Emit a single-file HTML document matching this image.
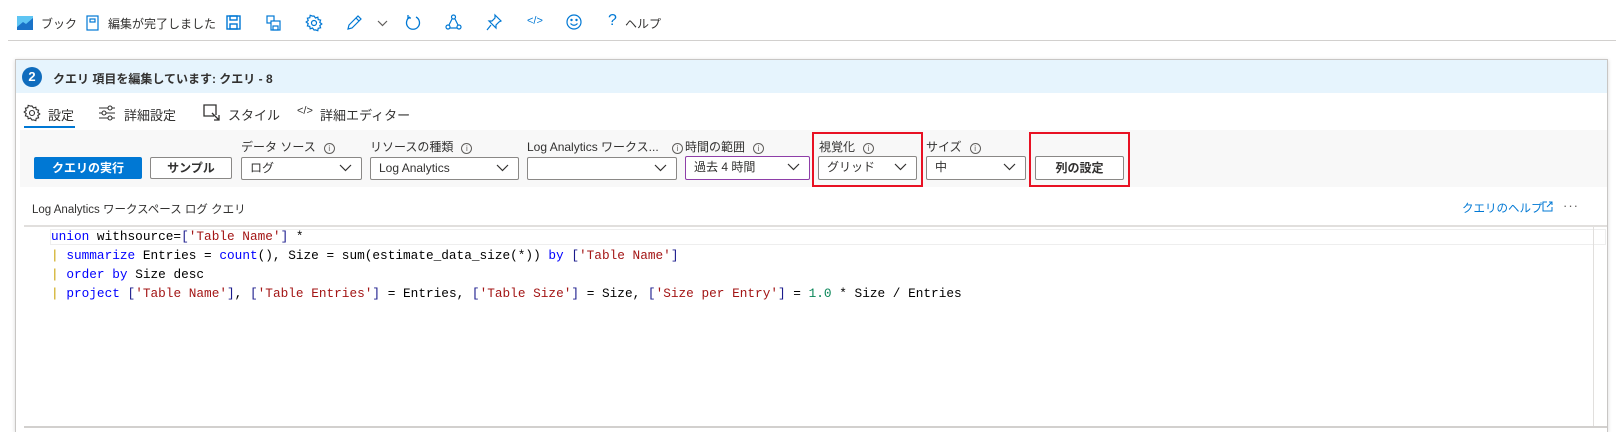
<!DOCTYPE html>
<html><head><meta charset="utf-8"><style>
*{margin:0;padding:0;box-sizing:border-box}
body{width:1624px;height:432px;background:#fff;position:relative;overflow:hidden;font-family:"Liberation Sans","Noto Sans CJK JP",sans-serif;color:#323130;font-size:12px}
.a{position:absolute;white-space:nowrap}
svg.a{overflow:visible}
.dd{position:absolute;height:23px;border:1px solid #8a8886;background:#fff;border-radius:2px;font-size:12px;line-height:21px;padding-left:8px;color:#323130}
.dd svg{position:absolute;right:9px;top:6px}
.lbl{position:absolute;font-size:12px;color:#323130;top:138px}
.info{display:inline-block;width:11px;height:11px;border:1px solid #605e5c;border-radius:50%;font-size:8px;line-height:9px;text-align:center;vertical-align:0px;margin-left:8px;color:#605e5c}
.code{position:absolute;font-family:"Liberation Mono",monospace;font-size:12.75px;left:51px;white-space:pre;color:#000}
.k{color:#0000ff}.s{color:#a31515}.p{color:#c8a000}.n{color:#098658}.b{color:#1a1a8c}
</style></head><body>
<svg class="a" style="left:17px;top:16px" width="16" height="14"><rect width="16" height="14" fill="#5ec5f3"/><path d="M0 14 L0 11 L6 6 L9 8 L16 2 L16 14Z" fill="#1a73c8"/></svg>
<div class="a" style="left:41px;top:15px">ブック</div>
<svg class="a" style="left:86px;top:15px" width="13" height="16" fill="none" stroke="#0078d4" stroke-width="1.2"><rect x="1" y="1" width="11" height="14"/><rect x="4" y="4" width="5" height="3"/></svg>
<div class="a" style="left:108px;top:15px">編集が完了しました</div>
<svg class="a" style="left:226px;top:15px" width="15" height="15" fill="none" stroke="#0078d4" stroke-width="1.4"><rect x="1" y="1" width="13" height="13"/><rect x="4" y="1" width="7" height="4"/><rect x="4" y="9" width="7" height="5"/></svg>
<svg class="a" style="left:266px;top:15px" width="15" height="16" fill="none" stroke="#0078d4" stroke-width="1.2"><rect x="1" y="1" width="7" height="7"/><rect x="5" y="6" width="9" height="9" fill="#fff"/><rect x="7" y="11" width="5" height="4"/></svg>
<svg class="a" style="left:306px;top:15px" width="16" height="16" fill="none" stroke="#0078d4" stroke-width="1.2"><circle cx="8" cy="8" r="2.5"/><path d="M8 1l1.5 2 2.3-.8.4 2.4 2.4.5-.8 2.3 2 1.6-2 1.5.8 2.3-2.4.5-.4 2.4-2.3-.8L8 15l-1.5-2-2.3.8-.4-2.4-2.4-.5.8-2.3-2-1.6 2-1.5-.8-2.3 2.4-.5.4-2.4 2.3.8z"/></svg>
<svg class="a" style="left:346px;top:15px" width="16" height="16" fill="none" stroke="#0078d4" stroke-width="1.2"><path d="M2 14l1-4 9-9 3 3-9 9z M10 3l3 3"/></svg>
<svg class="a" style="left:377px;top:20px" width="11" height="7" fill="none" stroke="#605e5c" stroke-width="1.2"><path d="M1 1l4.5 4.5L10 1"/></svg>
<svg class="a" style="left:405px;top:14px" width="16" height="17" fill="none" stroke="#0078d4" stroke-width="1.3"><path d="M5 3A6.5 6.5 0 1 0 11 3"/><path d="M3 1v3h3"/></svg>
<svg class="a" style="left:445px;top:14px" width="17" height="17" fill="none" stroke="#0078d4" stroke-width="1.2"><circle cx="8.5" cy="3" r="2"/><circle cx="3" cy="13" r="2"/><circle cx="14" cy="13" r="2"/><path d="M7 5L4 11M10 5l3 6M5 14h7"/></svg>
<svg class="a" style="left:486px;top:14px" width="16" height="17" fill="none" stroke="#0078d4" stroke-width="1.2"><path d="M9 1l6 6-2 1-3 3 0 3-7-7 3 0 3-3z M5 11l-4 5"/></svg>
<div class="a" style="left:527px;top:15px;color:#0078d4;font-size:11px">&lt;/&gt;</div>
<svg class="a" style="left:566px;top:14px" width="16" height="16" fill="none" stroke="#0078d4" stroke-width="1.2"><circle cx="8" cy="8" r="7"/><circle cx="5.5" cy="6" r=".6" fill="#0078d4"/><circle cx="10.5" cy="6" r=".6" fill="#0078d4"/><path d="M4.5 9.5q3.5 3.5 7 0"/></svg>
<div class="a" style="left:608px;top:12px;color:#0078d4;font-size:16px">?</div>
<div class="a" style="left:625px;top:15px">ヘルプ</div>
<div class="a" style="left:8px;top:40px;width:1608px;height:1px;background:#d2d0ce"></div>
<div class="a" style="left:15px;top:59px;width:1593px;height:373px;border:1px solid #c8c6c4;border-bottom:none;background:#fff;box-shadow:0 1px 4px rgba(0,0,0,.15)"></div>
<div class="a" style="left:16px;top:60px;width:1591px;height:33px;background:#e6f4fd"></div>
<div class="a" style="left:22px;top:67px;width:20px;height:20px;border-radius:50%;background:#0f6cbd;color:#fff;font-weight:bold;font-size:13px;text-align:center;line-height:20px">2</div>
<div class="a" style="left:53px;top:70px;font-size:12px;font-weight:bold;color:#323130">クエリ 項目を編集しています: クエリ - 8</div>
<svg class="a" style="left:24px;top:105px" width="16" height="16" fill="none" stroke="#323130" stroke-width="1.1"><circle cx="8" cy="8" r="2.5"/><path d="M8 1l1.5 2 2.3-.8.4 2.4 2.4.5-.8 2.3 2 1.6-2 1.5.8 2.3-2.4.5-.4 2.4-2.3-.8L8 15l-1.5-2-2.3.8-.4-2.4-2.4-.5.8-2.3-2-1.6 2-1.5-.8-2.3 2.4-.5.4-2.4 2.3.8z"/></svg>
<div class="a" style="left:48px;top:105px;font-size:13px">設定</div>
<div class="a" style="left:24px;top:126px;width:51px;height:2px;background:#0078d4"></div>
<svg class="a" style="left:99px;top:105px" width="16" height="15" fill="none" stroke="#323130" stroke-width="1.1"><path d="M0 3h16M0 8h16M0 13h16"/><circle cx="11" cy="3" r="2" fill="#fff"/><circle cx="5" cy="8" r="2" fill="#fff"/><circle cx="11" cy="13" r="2" fill="#fff"/></svg>
<div class="a" style="left:124px;top:105px;font-size:13px">詳細設定</div>
<svg class="a" style="left:203px;top:104px" width="18" height="18" fill="none" stroke="#323130" stroke-width="1.3"><path d="M13 11V1H1v11h10M9 9l7 7M16 11v5h-5"/></svg>
<div class="a" style="left:228px;top:105px;font-size:13px">スタイル</div>
<div class="a" style="left:297px;top:105px;font-size:11px">&lt;/&gt;</div>
<div class="a" style="left:320px;top:105px;font-size:13px">詳細エディター</div>
<div class="a" style="left:20px;top:130px;width:1587px;height:57px;background:#f8f8f8"></div>
<div class="a" style="left:34px;top:157px;width:108px;height:22px;background:#0078d4;border-radius:2px;color:#fff;font-weight:bold;text-align:center;line-height:22px">クエリの実行</div>
<div class="a" style="left:150px;top:157px;width:82px;height:22px;border:1px solid #8a8886;background:#fff;border-radius:2px;font-weight:bold;text-align:center;line-height:20px">サンプル</div>
<div class="lbl" style="left:241px">データ ソース<span class="info">i</span></div>
<div class="dd" style="left:241px;top:157px;width:121px">ログ<svg width="13" height="8" fill="none" stroke="#323130" stroke-width="1.2"><path d="M1 1l5.5 5.5L12 1"/></svg></div>
<div class="lbl" style="left:370px">リソースの種類<span class="info">i</span></div>
<div class="dd" style="left:370px;top:157px;width:149px">Log Analytics<svg width="13" height="8" fill="none" stroke="#323130" stroke-width="1.2"><path d="M1 1l5.5 5.5L12 1"/></svg></div>
<div class="lbl" style="left:527px">Log Analytics ワークス...</div>
<div class="dd" style="left:527px;top:157px;width:150px"><svg width="13" height="8" fill="none" stroke="#323130" stroke-width="1.2"><path d="M1 1l5.5 5.5L12 1"/></svg></div>
<div class="lbl" style="left:672px"><span class="info" style="margin:0 2px 0 0">i</span>時間の範囲<span class="info">i</span></div>
<div class="dd" style="left:685px;top:156px;width:125px;height:24px;border-color:#8e3ea8">過去 4 時間<svg width="13" height="8" fill="none" stroke="#323130" stroke-width="1.2"><path d="M1 1l5.5 5.5L12 1"/></svg></div>
<div class="a" style="left:812px;top:132px;width:111px;height:55px;border:2px solid #e81123"></div>
<div class="lbl" style="left:819px">視覚化<span class="info">i</span></div>
<div class="dd" style="left:818px;top:156px;width:99px;height:24px">グリッド<svg width="13" height="8" fill="none" stroke="#323130" stroke-width="1.2"><path d="M1 1l5.5 5.5L12 1"/></svg></div>
<div class="lbl" style="left:926px">サイズ<span class="info">i</span></div>
<div class="dd" style="left:926px;top:156px;width:100px;height:24px">中<svg width="13" height="8" fill="none" stroke="#323130" stroke-width="1.2"><path d="M1 1l5.5 5.5L12 1"/></svg></div>
<div class="a" style="left:1029px;top:132px;width:101px;height:55px;border:2px solid #e81123"></div>
<div class="a" style="left:1035px;top:156px;width:89px;height:24px;border:1px solid #8a8886;background:#fff;border-radius:2px;font-weight:bold;text-align:center;line-height:22px">列の設定</div>
<div class="a" style="left:32px;top:201px;font-size:11.5px">Log Analytics ワークスペース ログ クエリ</div>
<div class="a" style="left:1462px;top:200px;font-size:11.5px;color:#0078d4">クエリのヘルプ</div>
<svg class="a" style="left:1542px;top:201px" width="11" height="11" fill="none" stroke="#0078d4" stroke-width="1"><path d="M5 1H1v9h9V6M7 1h3v3M10 1L5 6"/></svg>
<div class="a" style="left:1563px;top:198px;font-size:13px;color:#605e5c;letter-spacing:1px">···</div>
<div class="a" style="left:24px;top:225px;width:1583px;height:2px;background:#e1dfdd"></div>
<div class="a" style="left:50px;top:229px;width:1556px;height:16px;border:1px solid #eeeeee"></div>
<div class="a" style="left:1593px;top:227px;width:1px;height:200px;background:#e1dfdd"></div>
<div class="a" style="left:24px;top:426px;width:1583px;height:2px;background:#d2d0ce"></div>
<div class="code" style="top:229px"><span class="k">union</span> withsource=<span class="b">[</span><span class="s">'Table Name'</span><span class="b">]</span> *</div>
<div class="code" style="top:248px"><span class="p">|</span> <span class="k">summarize</span> Entries = <span class="k">count</span>(), Size = sum(estimate_data_size(*)) <span class="k">by</span> <span class="b">[</span><span class="s">'Table Name'</span><span class="b">]</span></div>
<div class="code" style="top:267px"><span class="p">|</span> <span class="k">order</span> <span class="k">by</span> Size desc</div>
<div class="code" style="top:286px"><span class="p">|</span> <span class="k">project</span> <span class="b">[</span><span class="s">'Table Name'</span><span class="b">]</span>, <span class="b">[</span><span class="s">'Table Entries'</span><span class="b">]</span> = Entries, <span class="b">[</span><span class="s">'Table Size'</span><span class="b">]</span> = Size, <span class="b">[</span><span class="s">'Size per Entry'</span><span class="b">]</span> = <span class="n">1.0</span> * Size / Entries</div>
</body></html>
